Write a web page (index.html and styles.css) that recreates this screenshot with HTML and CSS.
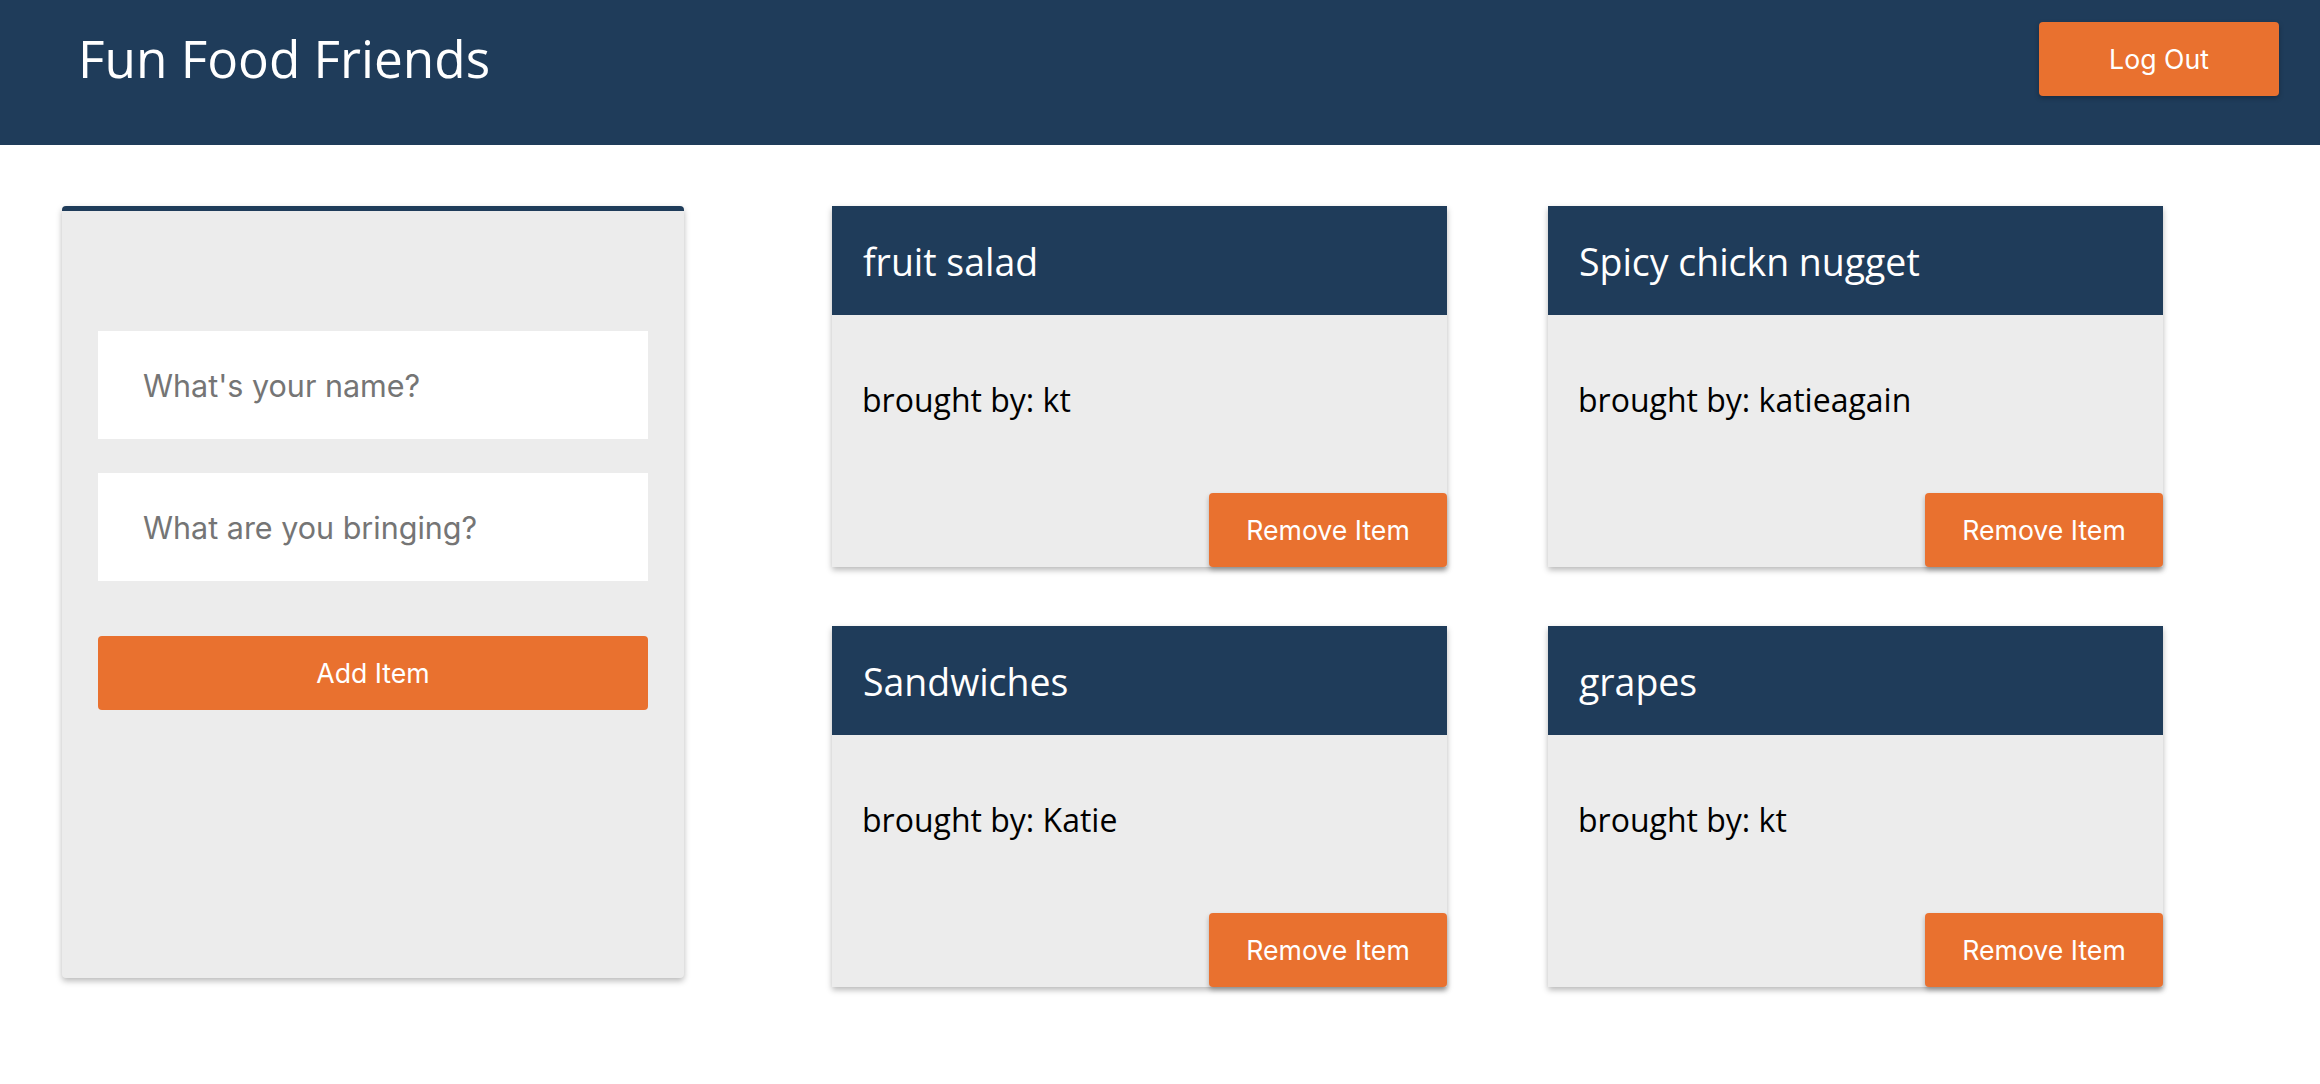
FILE: index.html
```html
<!DOCTYPE html>
<html lang="en">
<head>
<meta charset="utf-8">
<title>Fun Food Friends</title>
<link rel="stylesheet" href="styles.css">
</head>
<body>
<header class="topbar">
  <h1 class="brand">Fun Food Friends</h1>
  <button class="btn btn-logout">Log Out</button>
</header>
<main class="layout">
  <section class="add-panel">
    <form class="add-form">
      <input class="field" type="text" placeholder="What's your name?">
      <input class="field" type="text" placeholder="What are you bringing?">
      <button type="button" class="btn btn-add">Add Item</button>
    </form>
  </section>
  <section class="items">
    <article class="item">
      <div class="item-head"><h3 class="item-title">fruit salad</h3></div>
      <div class="item-body">
        <p class="item-by">brought by: kt</p>
        <div class="item-actions"><button class="btn btn-remove">Remove Item</button></div>
      </div>
    </article>
    <article class="item">
      <div class="item-head"><h3 class="item-title">Spicy chickn nugget</h3></div>
      <div class="item-body">
        <p class="item-by">brought by: katieagain</p>
        <div class="item-actions"><button class="btn btn-remove">Remove Item</button></div>
      </div>
    </article>
    <article class="item">
      <div class="item-head"><h3 class="item-title">Sandwiches</h3></div>
      <div class="item-body">
        <p class="item-by">brought by: Katie</p>
        <div class="item-actions"><button class="btn btn-remove">Remove Item</button></div>
      </div>
    </article>
    <article class="item">
      <div class="item-head"><h3 class="item-title">grapes</h3></div>
      <div class="item-body">
        <p class="item-by">brought by: kt</p>
        <div class="item-actions"><button class="btn btn-remove">Remove Item</button></div>
      </div>
    </article>
  </section>
</main>
</body>
</html>
```
FILE: styles.css
```css
* { box-sizing: border-box; }

body {
  margin: 0;
  background: #ffffff;
  font-family: "Open Sans", "Liberation Sans", sans-serif;
  color: #000;
}

.topbar {
  height: 145px;
  background: #1f3c5a;
  display: flex;
  justify-content: space-between;
  align-items: flex-start;
  padding: 22px 41px 0 78px;
}

.brand {
  margin: 1px 0 0 0;
  font-size: 51.3px;
  font-weight: 400;
  line-height: 70px;
  color: #ffffff;
}

.btn {
  border: none;
  background: #e9712f;
  color: #ffffff;
  font-family: Inter, "Liberation Sans", sans-serif;
  font-size: 26.67px;
  font-weight: 400;
  border-radius: 4px;
  cursor: pointer;
  padding: 0;
}

.btn-logout {
  width: 240px;
  height: 74px;
  box-shadow: 0 2px 5px rgba(0, 0, 0, 0.28);
}

.layout {
  display: flex;
  align-items: flex-start;
  padding: 61px 0 40px 62px;
}

.add-panel {
  width: 622px;
  height: 772px;
  background: #ececec;
  border-top: 5px solid #1f3c5a;
  border-radius: 4px;
  box-shadow: 0 3px 6px rgba(0, 0, 0, 0.28);
  padding: 120px 36px 0 36px;
}

.add-form {
  display: flex;
  flex-direction: column;
}

.field {
  width: 550px;
  height: 108px;
  border: none;
  background: #ffffff;
  padding: 0 0 0 45px;
  font-family: Inter, "Liberation Sans", sans-serif;
  font-size: 30.5px;
  color: #333;
  margin-bottom: 34px;
  outline: none;
}

.field::placeholder {
  color: #757575;
}

.btn-add {
  margin-top: 21px;
  width: 550px;
  height: 74px;
}

.items {
  margin-left: 148px;
  display: grid;
  grid-template-columns: 615px 615px;
  column-gap: 101px;
  row-gap: 59px;
}

.item {
  width: 615px;
  background: #ececec;
  box-shadow: 0 3px 6px rgba(0, 0, 0, 0.28);
  display: flex;
  flex-direction: column;
}

.item-head {
  height: 109px;
  background: #1f3c5a;
  padding: 30px 31px 0 31px;
}

.item-title {
  margin: 0;
  font-size: 37.44px;
  font-weight: 400;
  line-height: 51px;
  color: #ffffff;
}

.item-body {
  height: 252px;
  display: flex;
  flex-direction: column;
  padding-top: 63px;
}

.item-by {
  margin: 0 0 0 30px;
  font-size: 32px;
  line-height: 44px;
}

.item-actions {
  margin-top: auto;
  display: flex;
  justify-content: flex-end;
}

.btn-remove {
  width: 238px;
  height: 74px;
  box-shadow: 0 3px 5px rgba(0, 0, 0, 0.28);
}
```
